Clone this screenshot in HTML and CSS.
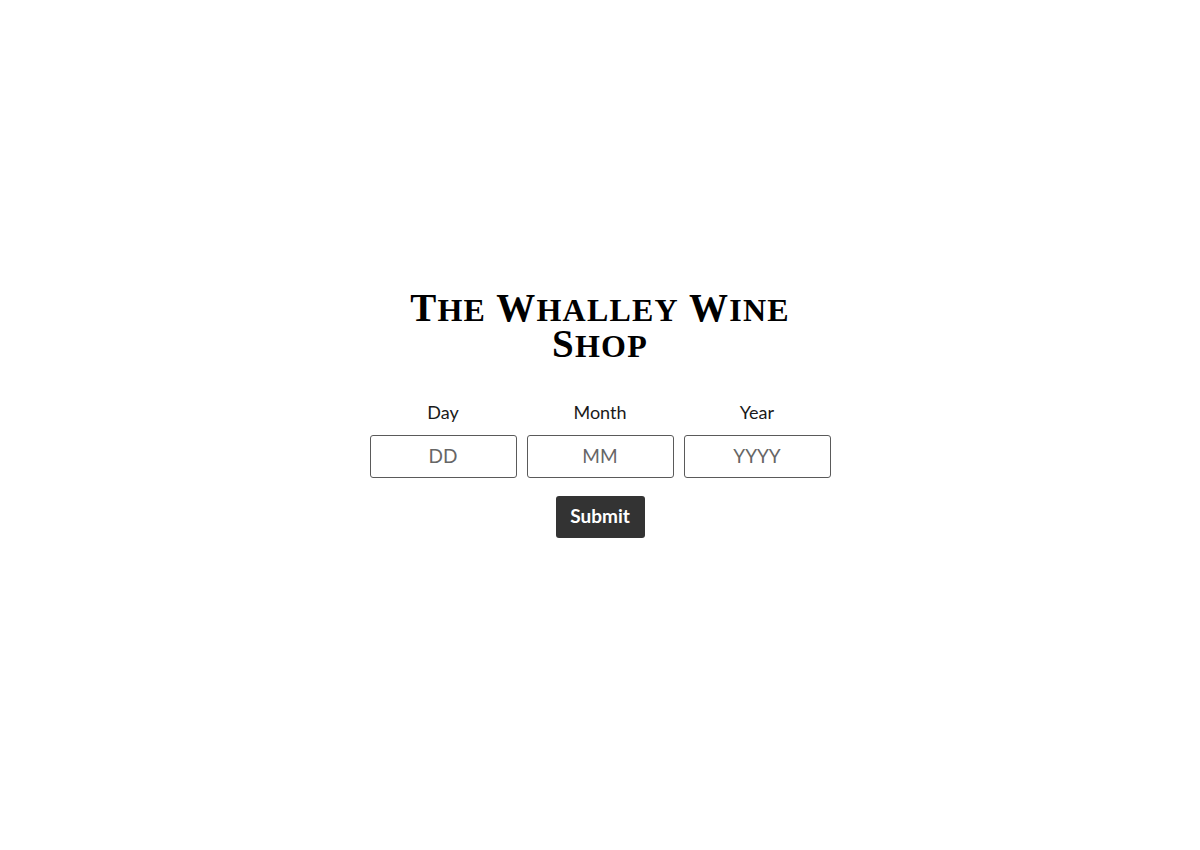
FILE: index.html
```html
<!DOCTYPE html>
<html lang="en">
<head>
<meta charset="utf-8">
<title>The Whalley Wine Shop</title>
<link rel="stylesheet" href="styles.css">
</head>
<body>
<main class="gate">
  <h1 class="logo">
    <span class="logo-line">T<span class="sc">he</span> W<span class="sc">halley</span> W<span class="sc">ine</span></span>
    <span class="logo-line">S<span class="sc">hop</span></span>
  </h1>
  <form class="dob">
    <div class="fields">
      <label class="field">
        <span class="field-label">Day</span>
        <input class="field-input" type="text" placeholder="DD">
      </label>
      <label class="field">
        <span class="field-label">Month</span>
        <input class="field-input" type="text" placeholder="MM">
      </label>
      <label class="field">
        <span class="field-label">Year</span>
        <input class="field-input" type="text" placeholder="YYYY">
      </label>
    </div>
    <button class="submit" type="button">Submit</button>
  </form>
</main>
</body>
</html>
```

FILE: styles.css
```css
html, body {
  margin: 0;
  padding: 0;
  background: #fff;
}
body {
  font-family: Lato, "Open Sans", sans-serif;
  color: #111;
}
.gate {
  display: flex;
  flex-direction: column;
  align-items: center;
  padding-top: 290px;
}
.logo {
  margin: 0;
  display: flex;
  flex-direction: column;
  align-items: center;
  font-family: "Liberation Serif", "DejaVu Serif", serif;
  font-weight: bold;
  font-size: 39px;
  color: #000;
}
.logo-line {
  display: block;
  line-height: 36px;
  height: 36px;
  letter-spacing: 1.2px;
  white-space: nowrap;
}
.sc {
  text-transform: uppercase;
  font-size: 32px;
}
.dob {
  display: flex;
  flex-direction: column;
  align-items: center;
  margin-top: 38px;
}
.fields {
  display: flex;
  gap: 10px;
}
.field {
  display: flex;
  flex-direction: column;
  align-items: center;
  width: 147px;
}
.field-label {
  font-size: 18px;
  line-height: 24px;
  color: #1a1a1a;
  margin-bottom: 11px;
}
.field-input {
  box-sizing: border-box;
  width: 147px;
  height: 43px;
  border: 1px solid #5a5a5a;
  border-radius: 3px;
  padding: 0 8px 2px;
  font-family: Lato, "Open Sans", sans-serif;
  font-size: 19px;
  text-align: center;
  color: #333;
  background: #fff;
}
.field-input::placeholder {
  color: #666;
}
.submit {
  margin-top: 18px;
  width: 89px;
  height: 42px;
  border: none;
  border-radius: 3px;
  background: #333;
  color: #fff;
  font-family: Lato, "Open Sans", sans-serif;
  font-weight: bold;
  font-size: 19px;
  padding: 0 0 4px;
}
```
